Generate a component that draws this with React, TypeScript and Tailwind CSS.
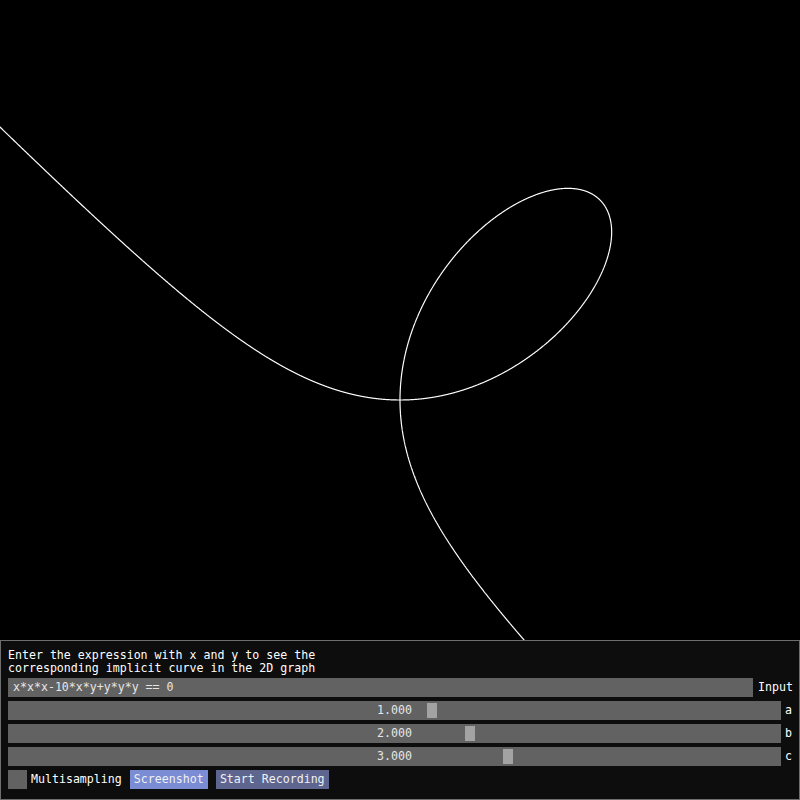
import { useMemo } from 'react';

const SCALE = 40;
const OX = 400;
const OY = 400;

// folium: x^3 + y^3 - 10xy = 0, param x = 10t/(1+t^3), y = 10t^2/(1+t^3), t = tan(th)
function foliumPath() {
    const q = Math.PI / 4;
    const segs: [number, number][] = [
        [-q + 0.004, 0],
        [0, 2 * q - 0.0005],
        [-2 * q + 0.0005, -q - 0.004],
    ];
    let d = '';
    for (const [a, b] of segs) {
        const n = 2000;
        let first = true;
        for (let i = 0; i <= n; i++) {
            const t = Math.tan(a + ((b - a) * i) / n);
            const den = 1 + t * t * t;
            const px = OX + ((10 * t) / den) * SCALE;
            const py = OY - ((10 * t * t) / den) * SCALE;
            if (Math.abs(px) > 3000 || Math.abs(py) > 3000) continue;
            d += `${first ? 'M' : 'L'}${px.toFixed(2)} ${py.toFixed(2)} `;
            first = false;
        }
    }
    return d;
}

function Slider({ value, label }: { value: number; label: string }) {
    const left = 2 + ((value + 10) / 20) * 759;
    return (
        <div className="flex items-center gap-[4px] h-[19px]">
            <div className="relative w-[773px] h-[19px] bg-[#626262] flex items-center justify-center">
                <span className="text-[#e6e6e6]">{value.toFixed(3)}</span>
                <div className="absolute top-[2px] w-[10px] h-[15px] bg-[#a3a3a3]" style={{ left }} />
            </div>
            <span>{label}</span>
        </div>
    );
}

export default function App() {
    const path = useMemo(() => foliumPath(), []);

    return (
        <div className="w-[800px] h-[800px] bg-black flex flex-col overflow-hidden">
            {/* graph */}
            <svg width={800} height={640} viewBox="0 0 800 640" className="block shrink-0">
                <path d={path} fill="none" stroke="#ffffff" strokeWidth={1.2} />
            </svg>

            {/* controls */}
            <div
                className="h-[160px] border border-[#6e6e6e] bg-[#0d0d0d] text-white pl-[7px] pt-[8px] leading-[13px] flex flex-col"
                style={{ fontFamily: '"DejaVu Sans Mono", "Liberation Mono", monospace', fontSize: '11.6px' }}
            >
                <p className="h-[13px] whitespace-pre">Enter the expression with x and y to see the</p>
                <p className="h-[13px] whitespace-pre">corresponding implicit curve in the 2D graph</p>

                <div className="flex items-center gap-[5px] mt-[3px] h-[19px]">
                    <div className="w-[745px] h-[19px] bg-[#626262] flex items-center pl-[5px] text-[#e6e6e6] whitespace-pre">
                        x*x*x-10*x*y+y*y*y == 0
                    </div>
                    <span>Input</span>
                </div>

                <div className="flex flex-col gap-[4px] mt-[4px]">
                    <Slider value={1} label="a" />
                    <Slider value={2} label="b" />
                    <Slider value={3} label="c" />
                </div>

                <div className="flex items-center mt-[4px] h-[19px]">
                    <div className="w-[19px] h-[19px] bg-[#626262]" />
                    <span className="ml-[4px] whitespace-pre">Multisampling</span>
                    <button className="ml-[8px] h-[19px] w-[78px] bg-[#7a8cd3] text-[#f0f0f0] flex items-center justify-center">
                        Screenshot
                    </button>
                    <button className="ml-[8px] h-[19px] w-[113px] bg-[#5e6690] text-[#f0f0f0] flex items-center justify-center whitespace-pre">
                        Start Recording
                    </button>
                </div>
            </div>
        </div>
    );
}
